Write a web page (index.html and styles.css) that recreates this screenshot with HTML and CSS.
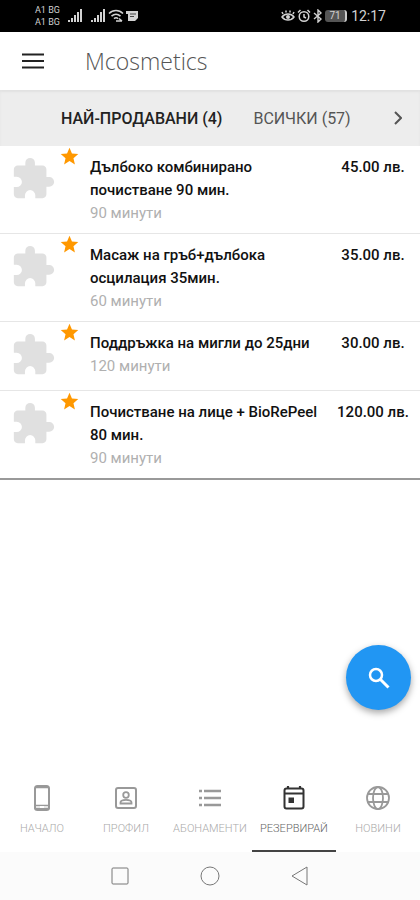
FILE: index.html
```html
<!DOCTYPE html>
<html lang="bg">
<head>
<meta charset="utf-8">
<meta name="viewport" content="width=device-width, initial-scale=1">
<title>Mcosmetics</title>
<link rel="stylesheet" href="styles.css">
</head>
<body>
<svg class="sprite" aria-hidden="true">
  <symbol id="puzzle" viewBox="0 0 24 24"><path d="M20.5 11H19V7c0-1.100-.9-2-2-2h-4V3.500a2.500 2.500 0 0 0-5 0V5H4c-1.100 0-2 .9-2 2v3.800h1.500a2.700 2.700 0 0 1 0 5.400H2V20c0 1.100.9 2 2 2h3.800v-1.500a2.700 2.700 0 0 1 5.400 0V22H17c1.100 0 2-.9 2-2v-4h1.500a2.500 2.500 0 0 0 0-5z"/></symbol>
  <symbol id="star" viewBox="0 0 24 24"><path d="M12 17.270 18.180 21l-1.640-7.030L22 9.240l-7.190-.61L12 2 9.190 8.630 2 9.240l5.460 4.730L5.820 21z"/></symbol>
  <symbol id="signal" viewBox="0 0 16 14"><path d="M1 11h2v2H1zM4 9h2v4H4zM7 6h2v7H7zM10 3h2v10h-2zM13 0h2v13h-2z"/></symbol>
</svg>
<div class="app">
  <div class="status">
    <div class="carriers"><span>A1 BG</span><span>A1 BG</span></div>
    <svg class="signal first"><use href="#signal"/></svg>
    <svg class="signal"><use href="#signal"/></svg>
    <svg class="wifi" viewBox="0 0 16 14"><path d="M1 4.500c4-4 10-4 14 0M3.500 7.200c3-2.600 6-2.600 9 0M6 9.700c1.500-1.300 2.800-1.300 4 0M8 12h6M11 9.500l3 2.500" fill="none" stroke="currentColor" stroke-width="1.600"/></svg>
    <svg class="note" viewBox="0 0 12 12"><path d="M0 1h12v7l-3 3H2V4H0z" fill="currentColor"/><path d="M4 4h6M4 6.500h4" stroke="#444" fill="none"/></svg>
    <div class="status-right">
      <svg class="stat" viewBox="0 0 14 14"><path d="M1 8c3-4 9-4 12 0-3 4-9 4-12 0zM2 5 1 3M5 3.500V1.500M9 3.500V1.500M12 5l1-2" fill="none" stroke="currentColor" stroke-width="1.500"/><circle cx="7" cy="8" r="2" fill="currentColor"/></svg>
      <svg class="stat" viewBox="0 0 14 14"><path d="M1 3.500 3.500 1M13 3.500 10.500 1M7 5v3l2 1" fill="none" stroke="currentColor" stroke-width="1.500"/><circle cx="7" cy="7.500" r="4.800" fill="none" stroke="currentColor" stroke-width="1.500"/></svg>
      <svg class="bt" viewBox="0 0 10 14"><path d="m1 4 7 6-3 3V1l3 3-7 6" fill="none" stroke="currentColor" stroke-width="1.400"/></svg>
      <span class="battery">71</span>
      <span class="time">12:17</span>
    </div>
  </div>

  <header class="header">
    <button class="menu" aria-label="Меню"><svg viewBox="0 0 22 16"><path d="M0 1.500h22M0 8h22M0 14.500h22" stroke="currentColor" stroke-width="2"/></svg></button>
    <h1>Mcosmetics</h1>
  </header>

  <div class="tabs">
    <button class="tab active">НАЙ-ПРОДАВАНИ (4)</button>
    <button class="tab">ВСИЧКИ (57)</button>
    <button class="next" aria-label="Напред"><svg viewBox="0 0 8 14"><path d="m1 1 6 6-6 6" fill="none" stroke="currentColor" stroke-width="2"/></svg></button>
  </div>

  <main>
    <ul class="list">
      <li class="item">
        <svg class="puzzle"><use href="#puzzle"/></svg><svg class="star"><use href="#star"/></svg>
        <div class="info"><h2>Дълбоко комбинирано почистване 90 мин.</h2><p>90 минути</p></div>
        <div class="price">45.00 лв.</div>
      </li>
      <li class="item">
        <svg class="puzzle"><use href="#puzzle"/></svg><svg class="star"><use href="#star"/></svg>
        <div class="info"><h2>Масаж на гръб+дълбока осцилация 35мин.</h2><p>60 минути</p></div>
        <div class="price">35.00 лв.</div>
      </li>
      <li class="item">
        <svg class="puzzle"><use href="#puzzle"/></svg><svg class="star"><use href="#star"/></svg>
        <div class="info"><h2>Поддръжка на мигли до 25дни</h2><p>120 минути</p></div>
        <div class="price">30.00 лв.</div>
      </li>
      <li class="item">
        <svg class="puzzle"><use href="#puzzle"/></svg><svg class="star"><use href="#star"/></svg>
        <div class="info"><h2>Почистване на лице + BioRePeel 80 мин.</h2><p>90 минути</p></div>
        <div class="price">120.00 лв.</div>
      </li>
    </ul>
  </main>

  <button class="fab" aria-label="Търсене"><svg viewBox="0 0 22 22"><circle cx="8" cy="8" r="6" fill="none" stroke="currentColor" stroke-width="2.500"/><path d="m12.500 12.500 8 8" stroke="currentColor" stroke-width="3"/></svg></button>

  <nav class="nav">
    <a href="#home"><svg viewBox="0 0 26 26"><rect x="6" y="1" width="14" height="24" rx="2.500" fill="none" stroke="currentColor" stroke-width="2"/><path d="M6 2.500h14M6 20.500h14v3H6z" fill="none" stroke="currentColor" stroke-width="1.500"/><path d="M11 22h4" stroke="#fff" stroke-width="2"/></svg><span>НАЧАЛО</span></a>
    <a href="#profile"><svg viewBox="0 0 26 26"><rect x="3" y="3" width="20" height="20" rx="2" fill="none" stroke="currentColor" stroke-width="2"/><circle cx="13" cy="10" r="2.800" fill="none" stroke="currentColor" stroke-width="1.800"/><path d="M7.500 18.500v-1c0-3.500 11-3.500 11 0v1z" fill="none" stroke="currentColor" stroke-width="1.800"/></svg><span>ПРОФИЛ</span></a>
    <a href="#plans"><svg viewBox="0 0 26 26"><path d="M2 6h3M2 13h3M2 20h3M7 6h17M7 13h17M7 20h17" stroke="currentColor" stroke-width="2.500"/></svg><span>АБОНАМЕНТИ</span></a>
    <a href="#book" class="current" aria-current="page"><svg viewBox="0 0 26 26"><rect x="3.500" y="3.500" width="19" height="20" rx="2" fill="none" stroke="currentColor" stroke-width="2"/><path d="M3.500 8.500h19M7 1v3M19 1v3" stroke="currentColor" stroke-width="2.200"/><path d="M7.500 12.500h5.500v5.500H7.500z" fill="currentColor"/></svg><span>РЕЗЕРВИРАЙ</span></a>
    <a href="#news"><svg viewBox="0 0 26 26"><g fill="none" stroke="currentColor" stroke-width="1.800"><circle cx="13" cy="13" r="11"/><ellipse cx="13" cy="13" rx="5" ry="11"/><path d="M3 9h20M3 17h20"/></g></svg><span>НОВИНИ</span></a>
  </nav>

  <div class="system">
    <svg viewBox="0 0 20 20"><rect x="2" y="2" width="16" height="16" rx="1"/></svg>
    <svg viewBox="0 0 20 20"><circle cx="10" cy="10" r="9"/></svg>
    <svg viewBox="0 0 20 20"><path d="M17 1v18L2 10z"/></svg>
  </div>
</div>
</body>
</html>
```
FILE: styles.css
```css
* { box-sizing: border-box; }
body { margin: 0; background: #fff; color: #111; font-family: Roboto, "Liberation Sans", sans-serif; }
h1, h2, p, ul { margin: 0; padding: 0; }
button { border: 0; padding: 0; background: none; font: inherit; color: inherit; cursor: pointer; }
a { color: inherit; text-decoration: none; }
svg { display: block; flex: none; }
.sprite { position: absolute; width: 0; height: 0; }

.app { position: relative; display: flex; flex-direction: column; min-height: 100vh; }

.status { display: flex; align-items: center; height: 32px; padding: 0 34px 0 35px; background: #000; color: #d2d2d2; }
.carriers { display: flex; flex-direction: column; font-size: 9px; line-height: 12px; }
.signal { width: 16px; height: 14px; fill: currentColor; margin-right: 2px; }
.signal.first { margin: 0 7px 0 7px; }
.wifi { width: 16px; height: 14px; }
.note { width: 12px; height: 12px; margin-left: 2px; }
.status-right { display: flex; align-items: center; gap: 2px; margin-left: auto; }
.stat { width: 14px; height: 14px; }
.bt { width: 10px; height: 14px; }
.battery { width: 22px; margin-right: 2px; border-radius: 3px; background: #555; border-right: 2px solid #ccc; font-size: 10px; line-height: 12px; text-align: center; }
.time { font-size: 14px; line-height: 16px; }

.header { display: flex; align-items: center; gap: 41px; height: 58px; padding: 0 22px; }
.menu svg { width: 22px; height: 16px; color: #222; }
h1 { font-family: "Open Sans", sans-serif; font-size: 23px; line-height: 32px; font-weight: 300; color: #555; }

.tabs { display: flex; align-items: center; gap: 31px; height: 56px; padding: 0 18px 0 61px; background: #ededed; box-shadow: inset 0 2px 2px #e2e2e2; font-size: 16px; font-weight: 400; white-space: nowrap; color: #555; }
.tab.active { font-weight: 500; color: #222; }
.next { margin-left: auto; }
.next svg { width: 8px; height: 14px; }

main { flex: 1; }
.list { list-style: none; border-bottom: 2px solid #999; }
.item { display: flex; align-items: flex-start; min-height: 69px; padding: 10px 0 8px 10px; border-bottom: 1px solid #e6e6e6; }
.item:last-child { border-bottom: 0; }
.puzzle { width: 46px; height: 46px; fill: #e0e0e0; }
.star { width: 21px; height: 21px; margin: -10px 0 0 3px; fill: #ff9800; }
.info { flex: 1; min-width: 0; padding-left: 10px; }
h2, .price { font-size: 15px; line-height: 23px; font-weight: 500; color: #111; }
.info p { font-size: 15px; line-height: 23px; color: #b0b0b0; }
.price { width: 94px; text-align: center; }

.fab { position: absolute; right: 9px; bottom: 190px; display: grid; place-items: center; width: 65px; height: 65px; border-radius: 50%; background: #2196f3; color: #fff; box-shadow: 0 3px 7px rgba(0, 0, 0, .35); }
.fab svg { width: 22px; height: 22px; }

.nav { display: grid; grid-template-columns: repeat(5, minmax(0, 1fr)); color: #999; }
.nav a { display: flex; flex-direction: column; align-items: center; gap: 10px; padding: 10px 0 13px; border-bottom: 2px solid transparent; }
.nav svg { width: 26px; height: 26px; }
.nav span { font-size: 11px; line-height: 16px; font-weight: 300; white-space: nowrap; color: #aaa; }
.nav .current { color: #333; border-color: #444; }
.nav .current span { color: #666; }

.system { display: flex; justify-content: center; align-items: center; gap: 70px; height: 48px; background: #fbfbfb; }
.system svg { width: 20px; height: 20px; fill: none; stroke: #777; stroke-width: 1px; }
```
